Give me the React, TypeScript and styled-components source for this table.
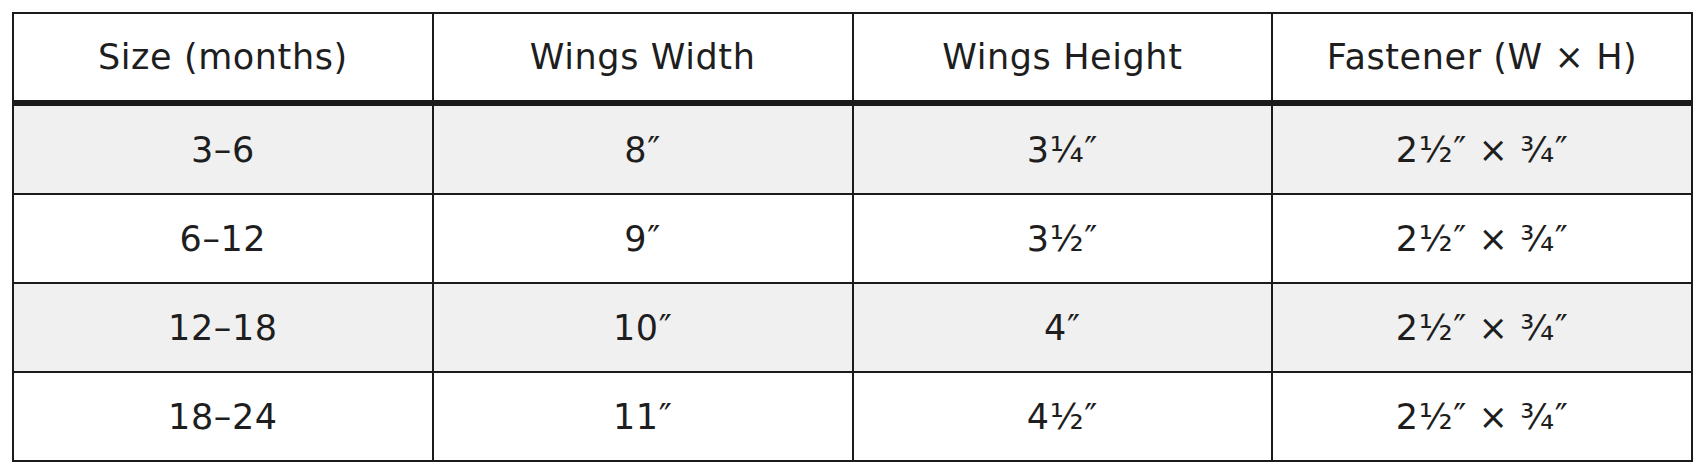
import React from "react";
import styled, { createGlobalStyle } from "styled-components";

const GlobalStyle = createGlobalStyle`
  body {
    margin: 0;
    background: #ffffff;
    font-family: "DejaVu Sans", Verdana, sans-serif;
  }
`;

const Page = styled.div`
  padding: 12px 11px 0 12px;
`;

const Table = styled.table`
  width: 100%;
  table-layout: fixed;
  border-collapse: collapse;
  border: 2px solid #1b1b1b;
  font-size: 35px;
  letter-spacing: 0.6px;
  color: #1e1e1e;
`;

const HeadCell = styled.th`
  height: 86px;
  padding: 0;
  font-weight: normal;
  text-align: center;
  border: 2px solid #1b1b1b;
  border-bottom: 6px solid #1b1b1b;
`;

const Row = styled.tr<{ $striped: boolean }>`
  background: ${(p) => (p.$striped ? "#f0f0f0" : "#ffffff")};
`;

const Cell = styled.td`
  height: 87px;
  padding: 0;
  text-align: center;
  border: 2px solid #1b1b1b;
`;

const headers = ["Size (months)", "Wings Width", "Wings Height", "Fastener (W \u00d7 H)"];

const rows = [
  ["3\u20136", "8\u2033", "3\u00bc\u2033", "2\u00bd\u2033 \u00d7 \u00be\u2033"],
  ["6\u201312", "9\u2033", "3\u00bd\u2033", "2\u00bd\u2033 \u00d7 \u00be\u2033"],
  ["12\u201318", "10\u2033", "4\u2033", "2\u00bd\u2033 \u00d7 \u00be\u2033"],
  ["18\u201324", "11\u2033", "4\u00bd\u2033", "2\u00bd\u2033 \u00d7 \u00be\u2033"],
];

export default function App() {
  return (
    <Page>
      <GlobalStyle />
      <Table>
        <thead>
          <tr>
            {headers.map((h) => (
              <HeadCell key={h}>{h}</HeadCell>
            ))}
          </tr>
        </thead>
        <tbody>
          {rows.map((r, i) => (
            <Row key={r[0]} $striped={i % 2 === 0}>
              {r.map((c, j) => (
                <Cell key={j}>{c}</Cell>
              ))}
            </Row>
          ))}
        </tbody>
      </Table>
    </Page>
  );
}
